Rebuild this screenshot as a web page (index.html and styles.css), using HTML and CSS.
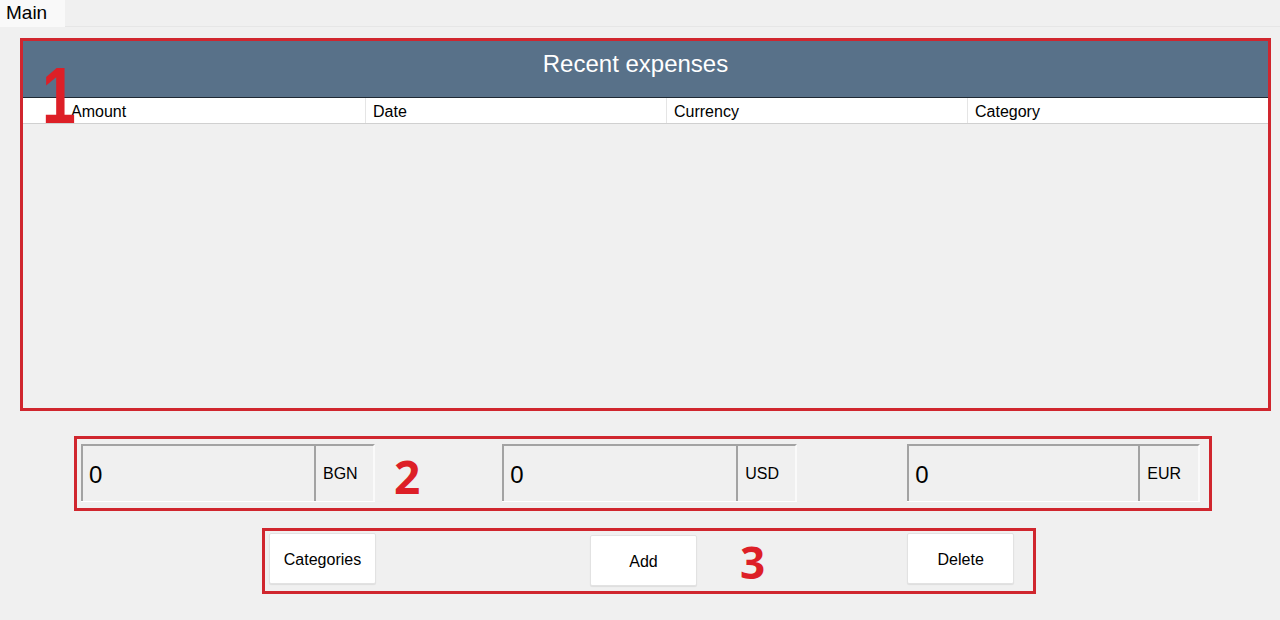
FILE: index.html
```html
<!DOCTYPE html>
<html>
<head>
<meta charset="utf-8">
<link rel="stylesheet" href="styles.css">
</head>
<body>
<div class="tabbar">
  <div class="tab">Main</div>
</div>
<div class="main">
  <section class="box box-table">
    <span class="mark mark-1">1</span>
    <div class="table-title">Recent expenses</div>
    <div class="table-head">
      <div class="rowhead"></div>
      <div class="col col-first">Amount</div>
      <div class="col">Date</div>
      <div class="col">Currency</div>
      <div class="col col-last">Category</div>
    </div>
    <div class="table-body"></div>
  </section>

  <section class="box box-totals">
    <div class="field field-bgn">
      <div class="field-value">0</div>
      <div class="field-unit">BGN</div>
    </div>
    <span class="mark mark-2">2</span>
    <div class="field field-usd">
      <div class="field-value">0</div>
      <div class="field-unit">USD</div>
    </div>
    <div class="field field-eur">
      <div class="field-value">0</div>
      <div class="field-unit">EUR</div>
    </div>
  </section>

  <section class="box box-actions">
    <button class="btn btn-categories">Categories</button>
    <button class="btn btn-add">Add</button>
    <span class="mark mark-3">3</span>
    <button class="btn btn-delete">Delete</button>
  </section>
</div>
</body>
</html>
```

FILE: styles.css
```css
html, body {
  margin: 0;
  padding: 0;
  background: #f0f0f0;
  font-family: "Liberation Sans", Arial, sans-serif;
  color: #000;
  width: 1280px;
  height: 620px;
  overflow: hidden;
}

.tabbar {
  height: 26px;
  border-bottom: 1px solid #e6e6e6;
  background: #f0f0f0;
  display: flex;
}

.tab {
  width: 65px;
  height: 27px;
  background: #f9f9f9;
  font-size: 19px;
  line-height: 25px;
  padding-left: 6px;
  box-sizing: border-box;
}

.main {
  padding: 11px 9px 0 20px;
  display: flex;
  flex-direction: column;
}

.box {
  border: 3px solid #d0262e;
  box-sizing: border-box;
}

.mark {
  color: #dd1f27;
  font-weight: 700;
  line-height: 1;
}

/* ---- table ---- */
.box-table {
  position: relative;
  width: 1251px;
  height: 373px;
  display: flex;
  flex-direction: column;
}

.mark-1 {
  position: absolute;
  left: 19px;
  top: 15px;
  font-size: 80px;
  font-family: "Liberation Sans", Arial, sans-serif;
  transform: scaleX(0.76);
  transform-origin: left top;
}

.table-title {
  height: 57px;
  flex: none;
  background: #587189;
  border-bottom: 1px solid #1f2933;
  color: #fff;
  font-size: 24px;
  display: flex;
  align-items: center;
  justify-content: center;
  padding-right: 20px;
  padding-bottom: 10px;
  box-sizing: border-box;
}

.table-head {
  height: 26px;
  flex: none;
  background: #fff;
  border-bottom: 1px solid #d0d0d0;
  display: flex;
  box-sizing: border-box;
  font-size: 16px;
  line-height: 27px;
}

.rowhead {
  width: 42px;
  flex: none;
}

.col {
  width: 301px;
  flex: none;
  padding-left: 7px;
  box-sizing: border-box;
  border-right: 1px solid #e5e5e5;
}

.col-first {
  padding-left: 6px;
}

.col-last {
  flex: 1;
  border-right: none;
}

.table-body {
  flex: 1;
  background: #f0f0f0;
}

/* ---- totals ---- */
.box-totals {
  margin-top: 25px;
  margin-left: 54px;
  width: 1138px;
  height: 75px;
  display: flex;
  align-items: flex-start;
  padding: 5px 0 0 4px;
}

.field {
  display: flex;
  height: 58px;
  width: 294px;
  flex: none;
  border-bottom: 1px solid #fff;
  box-sizing: border-box;
}

.field-value {
  width: 235px;
  box-sizing: border-box;
  border-top: 2px solid #a3a3a3;
  border-left: 2px solid #a3a3a3;
  border-right: 2px solid #a3a3a3;
  font-size: 24px;
  padding-left: 6px;
  padding-top: 3px;
  line-height: 52px;
  background: #f0f0f0;
}

.field-unit {
  flex: 1;
  border-top: 2px solid #a3a3a3;
  border-right: 2px solid #fafafa;
  font-size: 16px;
  line-height: 52px;
  padding-top: 2px;
  padding-left: 7px;
  background: #f0f0f0;
}

.mark-2 {
  font-family: "Open Sans", sans-serif;
  font-size: 46px;
  margin-left: 19px;
  margin-top: 9px;
}

.field-usd {
  margin-left: 82px;
  width: 295px;
}

.field-usd .field-value {
  width: 236px;
}

.field-eur {
  margin-left: 110px;
  width: 293px;
}

.field-eur .field-value {
  width: 233px;
}

/* ---- actions ---- */
.box-actions {
  margin-top: 17px;
  margin-left: 242px;
  width: 774px;
  height: 66px;
  display: flex;
  align-items: flex-start;
  padding: 2px 0 0 4px;
}

.btn {
  width: 107px;
  height: 51px;
  background: #fff;
  border: 1px solid #e2e2e2;
  border-radius: 2px;
  box-shadow: 0 1px 1px rgba(0,0,0,0.08);
  font-family: "Liberation Sans", Arial, sans-serif;
  font-size: 16px;
  color: #000;
  padding: 0;
  flex: none;
}

.btn-categories {
  padding-top: 2px;
}

.btn-add {
  margin-left: 214px;
  margin-top: 2px;
  padding-top: 2px;
}

.mark-3 {
  font-family: "Open Sans", sans-serif;
  font-size: 44px;
  margin-left: 43px;
  margin-top: 7px;
}

.btn-delete {
  margin-left: 142px;
  padding-top: 2px;
}
```
